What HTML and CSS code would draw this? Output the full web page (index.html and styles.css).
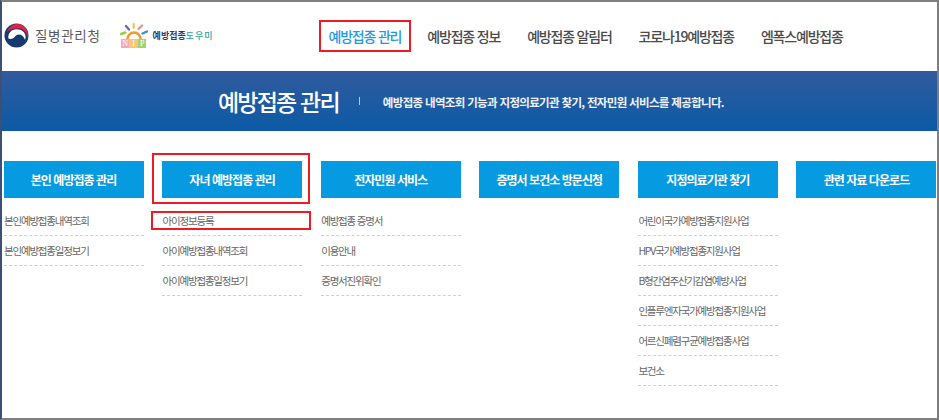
FILE: index.html
```html
<!DOCTYPE html>
<html lang="ko">
<head>
<meta charset="utf-8">
<title>예방접종 관리</title>
<link rel="stylesheet" href="styles.css">
</head>
<body>
<div class="frame">
  <header class="top">
    <div class="logos">
      <a class="logo-kdca">
        <svg class="taegeuk" width="25" height="25" viewBox="0 0 26 26">
          <circle cx="13" cy="13" r="12.5" fill="#173a6e"/>
          <path d="M3 9.500C5 3.500 10 1 14 1c6 0 11 5 11 12 0 1-.1 2-.4 3C24 10 20 5.500 14.500 5.500 10 5.500 6 6.500 3 9.500Z" fill="#e5223f"/>
          <path d="M4.500 15.500C4 11 7.500 6.500 13 6.500c5.500 0 9.500 3.500 9.500 8 0 1-.2 2-.7 2.800-1-3.300-3.800-5.300-6.600-5.300-3 0-3.700 3-6.200 4.200-1.700.8-3.600.4-5-.7Z" fill="#fff"/>
        </svg>
        <span class="kdca-name">질병관리청</span>
      </a>
      <a class="logo-nip">
        <span class="nip-mark">
          <svg width="28" height="19" viewBox="0 0 28 19">
            <path d="M7.500 17a6.500 6.500 0 0 1 13 0" fill="none" stroke="#f39a2d" stroke-width="2.500"/>
            <rect x="12.700" y="1" width="2" height="6" rx="1" fill="#f5c52b"/>
            <path d="M6 4l3 3.500" stroke="#5b6fc0" stroke-width="2.400" stroke-linecap="round"/>
            <path d="M22 3.500l-3.500 3.500" stroke="#f08aa0" stroke-width="2.400" stroke-linecap="round"/>
            <path d="M1 12l4.500-1.500" stroke="#9ccb4c" stroke-width="2.400" stroke-linecap="round"/>
            <path d="M27 9.500l-4.500 2" stroke="#3f8fd8" stroke-width="2.400" stroke-linecap="round"/>
          </svg>
          <span class="nip-letters"><i class="n">N</i><i class="i">I</i><i class="p">P</i></span>
        </span>
        <span class="nip-name">예방접종<em>도우미</em></span>
      </a>
    </div>
    <nav class="gnb">
      <a class="gnb-item is-active">예방접종 관리</a>
      <a class="gnb-item">예방접종 정보</a>
      <a class="gnb-item">예방접종 알림터</a>
      <a class="gnb-item">코로나19예방접종</a>
      <a class="gnb-item">엠폭스예방접종</a>
    </nav>
  </header>
  <section class="banner">
    <h1 class="banner-title">예방접종 관리</h1>
    <p class="banner-desc">예방접종 내역조회 기능과 지정의료기관 찾기, 전자민원 서비스를 제공합니다.</p>
  </section>
  <main class="menu">
    <div class="col">
      <h2 class="col-head">본인 예방접종 관리</h2>
      <ul class="col-list">
        <li>본인예방접종내역조회</li>
        <li>본인예방접종일정보기</li>
      </ul>
    </div>
    <div class="col col-marked">
      <span class="mark mark-head"></span>
      <span class="mark mark-row"></span>
      <h2 class="col-head">자녀 예방접종 관리</h2>
      <ul class="col-list">
        <li>아이정보등록</li>
        <li>아이예방접종내역조회</li>
        <li>아이예방접종일정보기</li>
      </ul>
    </div>
    <div class="col">
      <h2 class="col-head">전자민원 서비스</h2>
      <ul class="col-list">
        <li>예방접종 증명서</li>
        <li>이용안내</li>
        <li>증명서진위확인</li>
      </ul>
    </div>
    <div class="col">
      <h2 class="col-head">증명서 보건소 방문신청</h2>
    </div>
    <div class="col">
      <h2 class="col-head">지정의료기관 찾기</h2>
      <ul class="col-list">
        <li>어린이국가예방접종지원사업</li>
        <li>HPV국가예방접종지원사업</li>
        <li>B형간염주산기감염예방사업</li>
        <li>인플루엔자국가예방접종지원사업</li>
        <li>어르신폐렴구균예방접종사업</li>
        <li>보건소</li>
      </ul>
    </div>
    <div class="col">
      <h2 class="col-head">관련 자료 다운로드</h2>
    </div>
  </main>
</div>
</body>
</html>
```
FILE: styles.css
```css
* { box-sizing: border-box; }
html, body { margin: 0; padding: 0; background: #fff; }
body { font-family: "Noto Sans CJK KR", "Noto Sans", sans-serif; }
.frame {
  width: 939px;
  height: 420px;
  overflow: hidden;
  background: #fff;
  border-top: 2px solid #7f7f7f;
  border-right: 2px solid #7f7f7f;
  border-bottom: 2px solid #7f7f7f;
  border-left: 2px solid #3d4f73;
}
.top {
  height: 68px;
  display: flex;
  align-items: center;
}
.logos { display: flex; align-items: center; width: 317px; flex: none; padding-bottom: 2px; }
.logo-kdca { display: flex; align-items: center; margin-left: 2px; }
.taegeuk { display: block; flex: none; }
.kdca-name {
  margin-left: 6px;
  font-size: 13.500px;
  color: #5a5a5a;
  letter-spacing: 0.700px;
  white-space: nowrap;
}
.logo-nip { display: flex; align-items: center; margin-left: 19px; }
.nip-mark { display: flex; flex-direction: column; width: 28px; }
.nip-mark svg { display: block; margin-bottom: -2px; }
.nip-letters { display: flex; justify-content: center; height: 9px; }
.nip-letters i {
  width: 8.500px;
  height: 9px;
  font: normal 8px/9px "Liberation Serif", serif;
  color: #fff;
  text-align: center;
}
.nip-letters .n { background: #f6a9b4; }
.nip-letters .i { background: #f7c873; }
.nip-letters .p { background: #a5d36b; }
.nip-name {
  margin-left: 5px;
  font-size: 9px;
  font-weight: 700;
  color: #2c3c72;
  letter-spacing: 0;
  white-space: nowrap;
}
.nip-name em { font-style: normal; font-weight: 500; color: #2aa39a; letter-spacing: 1px; }
.gnb { display: flex; align-items: center; }
.gnb-item {
  font-size: 14px;
  font-weight: 500;
  line-height: 32px;
  color: #4a4a4a;
  letter-spacing: -1.200px;
  white-space: nowrap;
  margin-right: 27px;
}
.gnb-item.is-active {
  color: #1f9ae0;
  border: 2px solid #ed1c24;
  padding: 0 7.500px;
  margin-right: 16.500px;
  line-height: 28px;
}
.banner {
  margin-top: 1px;
  height: 60px;
  background: linear-gradient(#315a9d, #0c5aa6);
  display: flex;
  align-items: center;
  padding-left: 216px;
  color: #fff;
}
.banner-title {
  margin: 0;
  font-size: 23px;
  font-weight: 500;
  letter-spacing: -1.800px;
  white-space: nowrap;
  display: flex;
  align-items: center;
}
.banner-title::after {
  content: "";
  display: block;
  width: 1px;
  height: 8px;
  background: #b8c8e0;
  margin: 0 0 0 20px;
}
.banner-desc {
  margin: 2px 0 0 23px;
  font-size: 11.500px;
  font-weight: 700;
  letter-spacing: -0.670px;
  white-space: nowrap;
  color: #eef3fa;
}
.menu {
  display: grid;
  grid-template-columns: repeat(6, 140px);
  column-gap: 18.600px;
  padding: 30px 0 0 1.500px;
  align-items: start;
}
.col { position: relative; }
.col-head {
  margin: 0;
  height: 37px;
  background: #069ae0;
  color: #fff;
  font-size: 12px;
  font-weight: 700;
  line-height: 37px;
  text-align: center;
  letter-spacing: -0.950px;
  white-space: nowrap;
}
.col-list {
  list-style: none;
  margin: 8px 0 0;
  padding: 0;
}
.col-list li {
  height: 30px;
  line-height: 29px;
  font-size: 10.500px;
  color: #666;
  letter-spacing: -1.200px;
  white-space: nowrap;
  border-bottom: 1px dashed #cfcfcf;
  padding-left: 0.500px;
}
.mark {
  position: absolute;
  border: 2px solid #ed1c24;
  pointer-events: none;
}
.mark-head { left: -10px; top: -8px; width: 158px; height: 51px; }
.mark-row { left: -11px; top: 50px; width: 160px; height: 19px; }
```
